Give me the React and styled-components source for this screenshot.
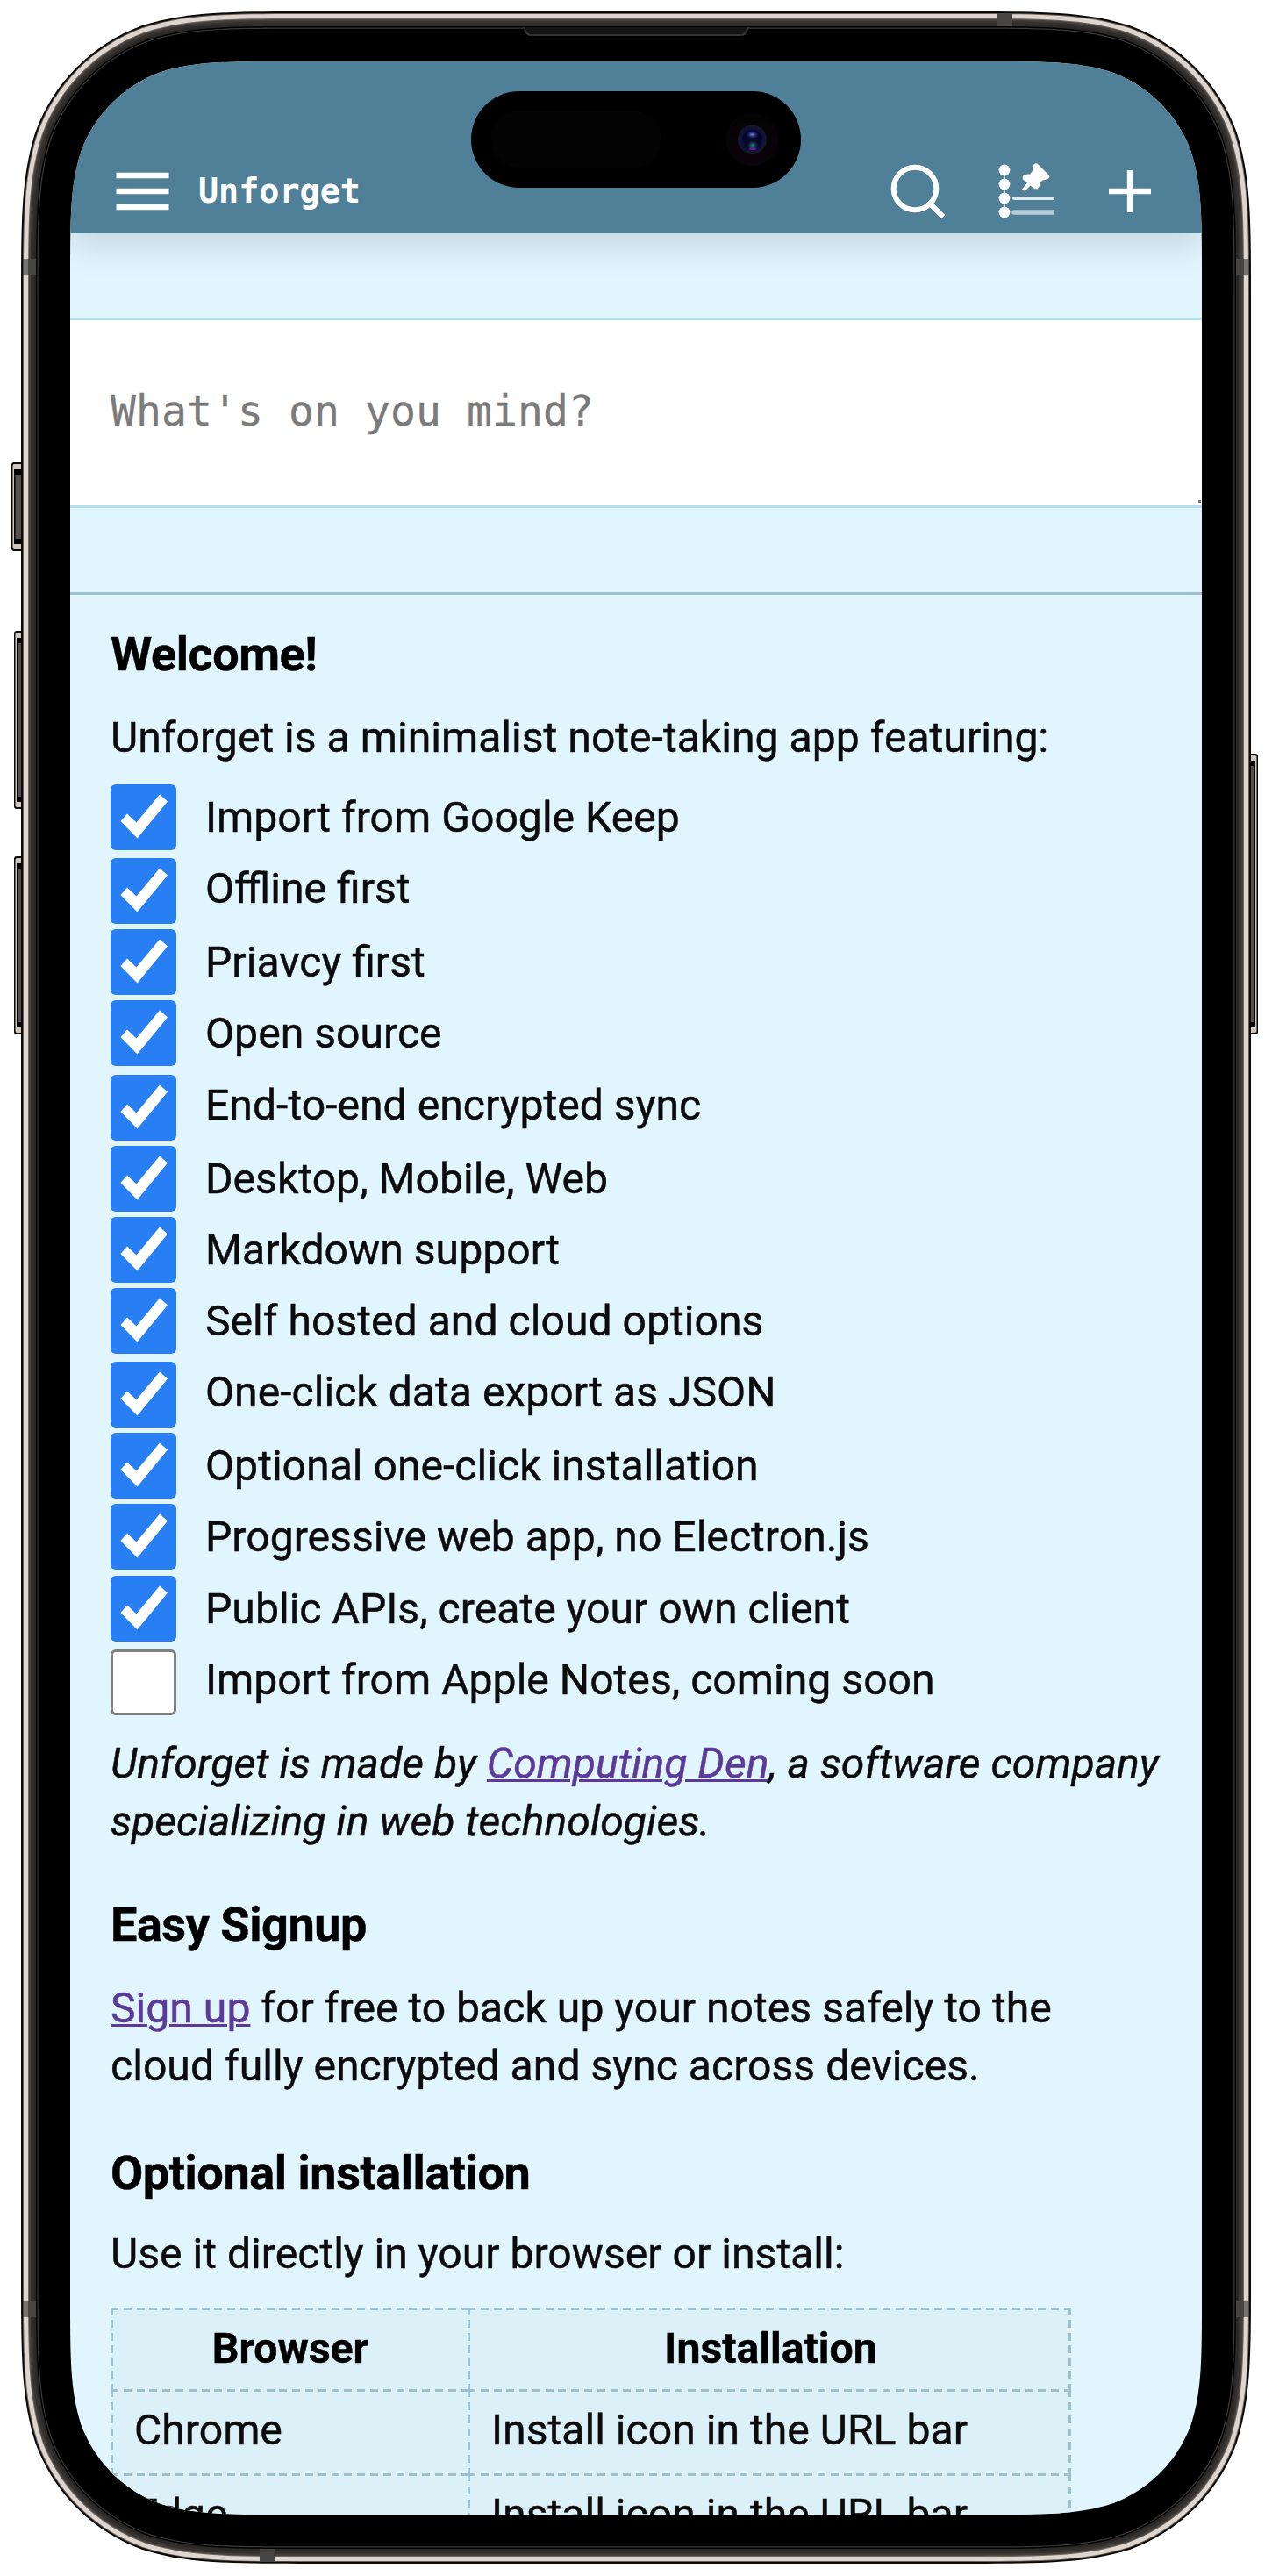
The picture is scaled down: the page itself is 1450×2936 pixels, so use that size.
import React from "react";
import styled, { createGlobalStyle, css } from "styled-components";

const Global = createGlobalStyle`
  html, body { margin: 0; padding: 0; background: #fff; }
  *, *::before, *::after { box-sizing: border-box; }
`;

const squircle = (x, y, w, h, r) => {
  const a = 1.528665 * r, b = 1.08849296 * r, c = 0.86840694 * r, d = 0.63149379 * r;
  const e = 0.07491139 * r, f = 0.37282383 * r, g = 0.16905956 * r;
  const R = x + w, B = y + h;
  return [
    `M${x + a} ${y}`,
    `L${R - a} ${y}`,
    `C${R - b} ${y} ${R - c} ${y} ${R - d} ${y + e}`,
    `C${R - f} ${y + g} ${R - g} ${y + f} ${R - e} ${y + d}`,
    `C${R} ${y + c} ${R} ${y + b} ${R} ${y + a}`,
    `L${R} ${B - a}`,
    `C${R} ${B - b} ${R} ${B - c} ${R - e} ${B - d}`,
    `C${R - g} ${B - f} ${R - f} ${B - g} ${R - d} ${B - e}`,
    `C${R - c} ${B} ${R - b} ${B} ${R - a} ${B}`,
    `L${x + a} ${B}`,
    `C${x + b} ${B} ${x + c} ${B} ${x + d} ${B - e}`,
    `C${x + f} ${B - g} ${x + g} ${B - f} ${x + e} ${B - d}`,
    `C${x} ${B - c} ${x} ${B - b} ${x} ${B - a}`,
    `L${x} ${y + a}`,
    `C${x} ${y + b} ${x} ${y + c} ${x + e} ${y + d}`,
    `C${x + g} ${y + f} ${x + f} ${y + g} ${x + d} ${y + e}`,
    `C${x + c} ${y} ${x + b} ${y} ${x + a} ${y}Z`,
  ].join(" ");
};

const Device = styled.div`
  position: relative;
  width: 1450px;
  height: 2936px;
  padding: 70px 80px;
  overflow: hidden;
  background: #fff;
`;

const Chassis = styled.svg`
  position: absolute;
  inset: 0;
`;

const Screen = styled.div`
  position: relative;
  width: 1290px;
  height: 2796px;
  display: flex;
  flex-direction: column;
  overflow: hidden;
  background: #e1f5fe;
  color: #0c0c0c;
  font-family: Roboto, "Liberation Sans", sans-serif;
  clip-path: path("${squircle(0, 0, 1290, 2796, 163)}");
`;

const Island = styled.svg`
  position: absolute;
  left: 457px;
  top: 34px;
  z-index: 3;
`;

const Header = styled.header`
  position: relative;
  z-index: 2;
  flex: none;
  height: 196px;
  padding: 0 57px 0 52px;
  display: flex;
  align-items: flex-end;
  background: #508098;
  box-shadow: 0 15px 36px rgba(0, 0, 0, 0.12);
`;

const Bar = styled.div`
  flex: 1;
  height: 96px;
  display: flex;
  align-items: center;
  color: #fff;
`;

const AppName = styled.h1`
  flex: 1;
  margin: 0 0 0 33px;
  padding-bottom: 1px;
  font: 700 38.4px/46px "DejaVu Sans Mono", monospace;
`;

const Actions = styled.div`
  display: flex;
  align-items: center;
  gap: 61px;
`;

const Composer = styled.section`
  flex: none;
  height: 412px;
  padding: 96px 0;
  border-bottom: 3px solid #9dbfd0;
  display: flex;
`;

const Prompt = styled.div`
  position: relative;
  flex: 1;
  padding: 0 46px 5px;
  display: flex;
  align-items: center;
  border: solid #b3dfee;
  border-width: 3px 0;
  background: #fff;
  color: #7b7b7b;
  font: 400 48px/56px "DejaVu Sans Mono", monospace;
  letter-spacing: 0.1px;
  -webkit-text-stroke: 0.3px currentColor;

  &::after {
    content: "";
    position: absolute;
    right: 1px;
    bottom: 3px;
    width: 3px;
    height: 3px;
    background: #777;
  }
`;

const Note = styled.article`
  flex: none;
  padding: 31px 46px 0;
  font-size: 48.15px;
  -webkit-text-stroke: 0.45px currentColor;
`;

const Heading = styled.h2`
  margin: 0 0 ${(p) => p.$gap}px;
  font-size: 54px;
  line-height: 74px;
  font-weight: 700;
  letter-spacing: -0.45px;
  color: #000;
`;

const Paragraph = styled.p`
  margin: 0 0 ${(p) => p.$gap}px;
  line-height: 66px;
  white-space: nowrap;
  ${(p) => p.$italic && css`font-style: italic;`}
`;

const Link = styled.a`
  color: #5b3a99;
  text-decoration: underline;
  text-decoration-thickness: 3px;
`;

const Tasks = styled.ul`
  margin: 0 0 19px;
  padding: 0;
  list-style: none;
`;

const Task = styled.li`
  height: ${(p) => (p.$tall ? 84 : 81.2)}px;
  display: flex;
  align-items: flex-start;
  gap: 33px;
  line-height: 75px;
  white-space: nowrap;
`;

const Box = styled.span`
  flex: none;
  width: 75px;
  height: 75px;
  margin-top: ${(p) => (p.$low ? 3 : 0)}px;
  border-radius: 6px;
  display: flex;
  background: #287ff4;
  ${(p) => !p.$done && css`
    background: #fff;
    border: 3px solid #808080;
  `}
`;

const Table = styled.table`
  border-collapse: separate;
  border-spacing: 0;
  width: 1095px;
  table-layout: fixed;
  line-height: 66px;
`;

const dash = (angle, period) =>
  `repeating-linear-gradient(${angle}, #9dc0d0 0 9px, transparent 9px ${period}px)`;

const Cell = styled.td`
  width: ${(p) => p.$w}px;
  height: 96px;
  padding: 0 24px 3px 27px;
  vertical-align: middle;
  background:
    ${dash("90deg", 14.8)} left top / 100% 3px no-repeat,
    ${(p) => dash("180deg", p.$pitch || 15)} left top / 3px 100% no-repeat,
    #dcf0f8;

  &:last-child {
    background:
      ${dash("90deg", 14.78)} left top / 100% 3px no-repeat,
      ${(p) => dash("180deg", p.$pitch || 15)} left top / 3px 100% no-repeat,
      ${(p) => dash("180deg", p.$pitch || 15)} right top / 3px 100% no-repeat,
      #dcf0f8;
  }
`;

const HeadCell = styled(Cell)`
  height: 93px;
  padding: 0 23px 0 26px;
  text-align: center;
  font-weight: 700;
  color: #000;
`;

const tasks = [
  { text: "Import from Google Keep" },
  { text: "Offline first", tall: true },
  { text: "Priavcy first" },
  { text: "Open source" },
  { text: "End-to-end encrypted sync", tall: true },
  { text: "Desktop, Mobile, Web" },
  { text: "Markdown support" },
  { text: "Self hosted and cloud options" },
  { text: "One-click data export as JSON", tall: true },
  { text: "Optional one-click installation" },
  { text: "Progressive web app, no Electron.js" },
  { text: "Public APIs, create your own client" },
];

const browsers = [
  ["Chrome", "Install icon in the URL bar"],
  ["Edge", "Install icon in the URL bar"],
];

const shells = [
  [0, "#0b0a09"],
  [2, "#6b6058"],
  [3, "#ddd5cf"],
  [8, "#6d665f"],
  [9, "#45403d"],
  [11, "#35312f"],
  [14, "#2b2827"],
  [17, "#000"],
  [18.5, "#3a3a3a"],
  [19.7, "#000"],
];

const keys = [
  { x: 13, y: 527, h: 101, w: 14 },
  { x: 16, y: 719, h: 203, w: 11 },
  { x: 16, y: 976, h: 203, w: 11 },
  { x: 1423, y: 859, h: 320, w: 11, right: true },
];

const bands = [
  [26, 295, 15, 18, 27],
  [1409, 295, 15, 18, 1418],
  [26, 2623, 15, 18, 27],
  [1409, 2623, 15, 18, 1418],
  [1136, 15, 18, 15],
  [296, 2905, 18, 15],
];

const Frame = () => (
  <Chassis width="1450" height="2936" viewBox="0 0 1450 2936">
    {keys.map((k) => (
      <g key={`${k.x}-${k.y}`}>
        <rect x={k.x} y={k.y} width={k.w} height={k.h} rx="3" fill="#0b0a09" />
        <rect x={k.x + (k.right ? 0 : 1.5)} y={k.y + 2} width={k.w - 1.5} height={k.h - 4} rx="2" fill="#cfc7c0" />
        <rect x={k.x + (k.right ? 0 : 3)} y={k.y + 8} width={k.w - 3} height={k.h - 16} fill="#000" />
        <rect x={k.x + (k.right ? 0 : 4.5)} y={k.y + 14} width={k.w - 5} height={k.h - 28} fill="#55504e" />
      </g>
    ))}
    {shells.map(([i, fill]) => (
      <path key={i} fill={fill} d={squircle(24 + i, 13 + i, 1402 - 2 * i, 2909 - 2 * i, 218 - i)} />
    ))}
    {bands.map(([x, y, w, h, shine]) => (
      <g key={`${x}-${y}`}>
        <rect x={x} y={y} width={w} height={h} fill="#474543" />
        {shine && <rect x={shine} y={y} width="5" height={h} fill="#757371" />}
      </g>
    ))}
    <path d="M596 31 H854 L852 36 Q850 41 845 41 H605 Q600 41 598 36Z" fill="#333" />
    <path d="M598 31 H852 L850 35 Q848 39 844 39 H606 Q602 39 600 35Z" fill="#141414" />
  </Chassis>
);

const Camera = () => (
  <Island width="376" height="110" viewBox="0 0 376 110">
    <defs>
      <linearGradient id="halo" x1="0" y1="0" x2="0" y2="1">
        <stop offset="0" stopColor="#030303" />
        <stop offset="1" stopColor="#0b030b" />
      </linearGradient>
      <radialGradient id="glint">
        <stop offset="0" stopColor="#7c7ce0" />
        <stop offset="1" stopColor="#20208a" stopOpacity="0" />
      </radialGradient>
      <radialGradient id="teal">
        <stop offset="0" stopColor="#2a8a86" />
        <stop offset="1" stopColor="#0a3a5a" stopOpacity="0" />
      </radialGradient>
    </defs>
    <rect width="376" height="110" rx="55" fill="#000" />
    <rect x="23" y="22.5" width="194" height="65.5" rx="32" fill="#030303" />
    <circle cx="320.5" cy="55" r="30" fill="url(#halo)" />
    <circle cx="320.5" cy="55" r="16.5" fill="#14142a" />
    <circle cx="320.5" cy="55" r="12" fill="#060626" stroke="#0d0d52" strokeWidth="1.5" />
    <ellipse cx="320.5" cy="49.5" rx="7.5" ry="5" fill="url(#glint)" />
    <ellipse cx="321" cy="61.5" rx="7" ry="5.5" fill="url(#teal)" />
    <ellipse cx="321" cy="65.5" rx="4" ry="1.5" fill="#5a2490" />
  </Island>
);

const MenuIcon = () => (
  <svg width="61" height="60" viewBox="0 0 61 60">
    <path d="M.5 12h60M.5 30h60M.5 48h60" stroke="#fff" strokeWidth="6.4" />
  </svg>
);

const SearchIcon = () => (
  <svg width="62" height="62" viewBox="0 0 62 62" fill="none" stroke="#fff" strokeWidth="6">
    <circle cx="28" cy="28" r="24.3" />
    <path d="M45 45L58 58" strokeLinecap="square" />
  </svg>
);

const PinnedIcon = () => (
  <svg width="64" height="64" viewBox="0 0 64 64" fill="#fff">
    {[8, 24, 40, 56].map((y) => (
      <circle key={y} cx="7" cy={y} r="6.4" />
    ))}
    <path d="M7 8V56" stroke="#fff" strokeWidth="2" opacity=".5" />
    <path d="M18 40H63" stroke="#e0ebf0" strokeWidth="4" strokeLinecap="round" />
    <path d="M18 56H63" stroke="#b8ccd6" strokeWidth="5.5" strokeLinecap="round" />
    <path d="M40 2Q42.500 -1 45.500 1.500L57.500 13.500Q59.500 16 56.500 18L50 19.800L47 23Q47.500 28 44 29.500L41 29L36.500 25.500L30.500 32L26.800 30L33 22.500L28 18.500Q27 15.500 29 13.800Q33 12 36 12.500L39 9Z" />
  </svg>
);

const PlusIcon = () => (
  <svg width="50" height="50" viewBox="0 0 50 50">
    <path d="M1 25h48M25 1v48" stroke="#fff" strokeWidth="6.4" />
  </svg>
);

const Check = () => (
  <svg width="75" height="75" viewBox="0 0 75 75">
    <path d="M11.500 42L19 33.500L29.500 43.500L56 11.500L65 19.500L30.500 61.500Z" fill="#fff" />
  </svg>
);

export default function App() {
  return (
    <Device>
      <Global />
      <Frame />
      <Screen>
        <Camera />
        <Header>
          <Bar>
            <MenuIcon />
            <AppName>Unforget</AppName>
            <Actions>
              <SearchIcon />
              <PinnedIcon />
              <PlusIcon />
            </Actions>
          </Bar>
        </Header>
        <Composer>
          <Prompt>What's on you mind?</Prompt>
        </Composer>
        <Note>
          <Heading $gap={25}>Welcome!</Heading>
          <Paragraph $gap={20}>Unforget is a minimalist note-taking app featuring:</Paragraph>
          <Tasks>
            {tasks.map(({ text, tall }) => (
              <Task key={text} $tall={tall}>
                <Box $done $low={tall}><Check /></Box>
                {text}
              </Task>
            ))}
            <Task>
              <Box $low />
              Import from Apple Notes, coming soon
            </Task>
          </Tasks>
          <Paragraph $gap={48} $italic>
            Unforget is made by <Link>Computing Den</Link>, a software company
            <br />
            specializing in web technologies.
          </Paragraph>
          <Heading $gap={25}>Easy Signup</Heading>
          <Paragraph $gap={52}>
            <Link>Sign up</Link> for free to back up your notes safely to the
            <br />
            cloud fully encrypted and sync across devices.
          </Paragraph>
          <Heading $gap={22.5}>Optional installation</Heading>
          <Paragraph $gap={28.1}>Use it directly in your browser or install:</Paragraph>
          <Table>
            <thead>
              <tr>
                <HeadCell as="th" $w={407} $pitch={14.5}>Browser</HeadCell>
                <HeadCell as="th" $w={688} $pitch={14.5}>Installation</HeadCell>
              </tr>
            </thead>
            <tbody>
              {browsers.map(([name, how]) => (
                <tr key={name}>
                  <Cell>{name}</Cell>
                  <Cell>{how}</Cell>
                </tr>
              ))}
            </tbody>
          </Table>
        </Note>
      </Screen>
    </Device>
  );
}
